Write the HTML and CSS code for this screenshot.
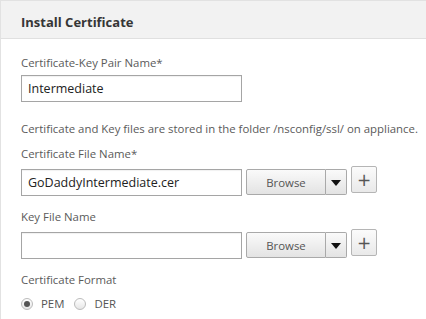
FILE: index.html
```html
<!DOCTYPE html>
<html lang="en">
<head>
  <meta charset="UTF-8">
  <title>Install Certificate</title>
  <link rel="stylesheet" href="styles.css">
</head>
<body>
  <div class="panel">
    <div class="panel-header">Install Certificate</div>

    <div class="panel-body">
      <div class="form-group first">
        <label class="field-label" for="pair">Certificate-Key Pair Name*</label>
        <input class="text-input" type="text" id="pair" value="Intermediate">
      </div>

      <p class="note">Certificate and Key files are stored in the folder /nsconfig/ssl/ on appliance.</p>

      <div class="form-group">
        <label class="field-label" for="certfile">Certificate File Name*</label>
        <div class="file-row">
          <input class="text-input" type="text" id="certfile" value="GoDaddyIntermediate.cer">
          <div class="browse">
            <button class="browse-main">Browse</button>
            <button class="browse-caret"><span class="caret"></span></button>
          </div>
          <button class="plus">+</button>
        </div>
      </div>

      <div class="form-group">
        <label class="field-label" for="keyfile">Key File Name</label>
        <div class="file-row">
          <input class="text-input" type="text" id="keyfile" value="">
          <div class="browse">
            <button class="browse-main">Browse</button>
            <button class="browse-caret"><span class="caret"></span></button>
          </div>
          <button class="plus">+</button>
        </div>
      </div>

      <div class="form-group">
        <div class="field-label">Certificate Format</div>
        <div class="radios">
          <label class="radio"><span class="dot checked"></span>PEM</label>
          <label class="radio"><span class="dot"></span>DER</label>
        </div>
      </div>
    </div>
  </div>
</body>
</html>
```

FILE: styles.css
```css
body {
  margin: 0;
  background: #fff;
  font-family: 'Open Sans', 'Noto Sans', sans-serif;
  font-size: 11.4px;
  color: #555;
}

.panel {
  border-top: 1px solid #e2e2e2;
  border-left: 1px solid #e2e2e2;
  min-height: 318px;
}

.panel-header {
  background: #f2f2f2;
  border-bottom: 1px solid #e0e0e0;
  box-sizing: border-box;
  height: 38px;
  line-height: 37px;
  padding: 3px 0 0 20px;
  font-size: 13px;
  font-weight: bold;
  color: #363636;
}

.panel-body {
  padding: 16px 0 0 20px;
}

.form-group {
  margin-bottom: 13px;
}

.form-group.first {
  margin-bottom: 19px;
}

.field-label {
  display: block;
  line-height: 16px;
  margin-bottom: 4px;
  color: #5a5a5a;
}

.text-input {
  display: block;
  box-sizing: border-box;
  width: 221px;
  height: 27px;
  border: 1px solid #a5a5a5;
  box-shadow: inset 0 1px 1px rgba(0,0,0,0.06);
  padding: 0 0 0 6px;
  font-family: inherit;
  font-size: 12.5px;
  color: #222;
  margin: 0;
}

.note {
  margin: 0 0 9px 0;
  line-height: 16px;
  color: #5a5a5a;
}

.file-row {
  display: flex;
  align-items: flex-start;
}

.file-row .text-input {
  margin-top: 3px;
}

.browse {
  display: flex;
  margin: 3px 0 0 4px;
  height: 26px;
}

.browse button {
  box-sizing: border-box;
  height: 26px;
  border: 1px solid #a9a9a9;
  background: linear-gradient(#fafafa, #e3e3e3);
  font-family: inherit;
  font-size: 11.4px;
  color: #555;
  margin: 0;
  padding: 0;
}

.browse-main {
  width: 80px;
  border-radius: 2px 0 0 2px;
}

.browse-caret {
  width: 21px;
  border-left: none !important;
  border-radius: 0 2px 2px 0;
  display: flex;
  align-items: center;
  justify-content: center;
}

.caret {
  width: 0;
  height: 0;
  border-left: 5px solid transparent;
  border-right: 5px solid transparent;
  border-top: 6px solid #111;
  margin-top: 2px;
}

.plus {
  box-sizing: border-box;
  width: 26px;
  height: 27px;
  margin-left: 4px;
  border: 1px solid #b5b5b5;
  border-radius: 2px;
  background: linear-gradient(#fbfbfb, #e9e9e9);
  font-family: 'DejaVu Sans', sans-serif;
  font-size: 17px;
  line-height: 22px;
  color: #555;
  padding: 0;
}

.radios {
  display: flex;
  gap: 10px;
  margin-top: 8px;
}

.radio {
  display: flex;
  align-items: center;
  line-height: 16px;
  color: #555;
}

.dot {
  box-sizing: border-box;
  width: 12px;
  height: 12px;
  border-radius: 50%;
  border: 1px solid #bbb;
  background: linear-gradient(#fff, #e6e6e6);
  margin-right: 8px;
  position: relative;
}

.dot.checked::after {
  content: "";
  position: absolute;
  left: 2px;
  top: 2px;
  width: 6px;
  height: 6px;
  border-radius: 50%;
  background: #555;
}
```
